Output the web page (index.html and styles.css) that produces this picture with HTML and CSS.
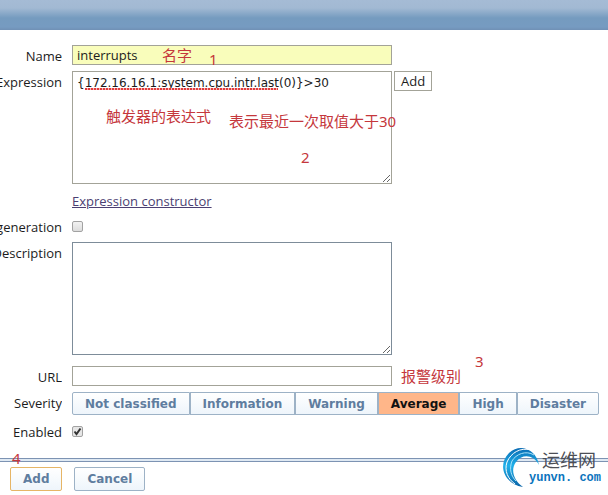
FILE: index.html
```
<!DOCTYPE html>
<html lang="en">

<head>
  <meta charset="UTF-8">
  <meta name="viewport" content="width=device-width, initial-scale=1.0">
  <title>Trigger</title>
  <link rel="stylesheet" href="styles.css">
</head>

<body>
  <header class="topbar"></header>

  <form class="trigger">
    <div class="fields">
      <label class="caption" for="name">Name</label>
      <div class="field">
        <input class="text required" type="text" id="name" value="interrupts" spellcheck="false">
      </div>

      <label class="caption" for="expression">Expression</label>
      <div class="field">
        <div class="area">
          <textarea class="text" id="expression" spellcheck="false">{172.16.16.1:system.cpu.intr.last(0)}&gt;30</textarea>
          <span class="squiggle"></span>
        </div>
        <button class="plain" type="button">Add</button>
      </div>

      <div class="field link-row">
        <a class="link" href="#">Expression constructor</a>
      </div>

      <label class="caption" for="generation">generation</label>
      <div class="field">
        <input class="check" type="checkbox" id="generation">
      </div>

      <label class="caption" for="description">Description</label>
      <div class="field last-area">
        <textarea class="text focused" id="description"></textarea>
      </div>

      <label class="caption" for="url">URL</label>
      <div class="field">
        <input class="text" type="text" id="url">
      </div>

      <span class="caption" id="severity">Severity</span>
      <div class="field severity" role="radiogroup" aria-labelledby="severity">
        <label><input type="radio" name="severity">Not classified</label>
        <label><input type="radio" name="severity">Information</label>
        <label><input type="radio" name="severity">Warning</label>
        <label><input type="radio" name="severity" checked>Average</label>
        <label><input type="radio" name="severity">High</label>
        <label><input type="radio" name="severity">Disaster</label>
      </div>

      <label class="caption" for="enabled">Enabled</label>
      <div class="field">
        <input class="check" type="checkbox" id="enabled" checked>
      </div>
    </div>

    <div class="actions">
      <button class="action main" type="button">Add</button>
      <button class="action" type="button">Cancel</button>
    </div>
  </form>

  <!-- notes over the form -->
  <span class="note note-name">名字</span>
  <span class="note note-one">1</span>
  <span class="note note-expression">触发器的表达式</span>
  <span class="note note-last">表示最近一次取值大于30</span>
  <span class="note note-two">2</span>
  <span class="note note-three">3</span>
  <span class="note note-level">报警级别</span>
  <span class="note note-four">4</span>

  <div class="brand">
    <svg class="swirl" width="40" height="42" viewBox="0 0 40 42">
      <defs>
        <linearGradient id="blue" x1="0" y1="0" x2="0" y2="1">
          <stop offset="0" stop-color="#0a6cb4" />
          <stop offset=".45" stop-color="#1fb0ea" />
          <stop offset="1" stop-color="#0b64a8" />
        </linearGradient>
      </defs>
      <path fill="url(#blue)" d="M37 18C34 2 18-4 7 6C-5 18 2 37 21 40C12 34 8 23 14 15C20 7 31 7 37 18Z" />
      <path fill="none" stroke="#fff" stroke-width="1" d="M29 3C18 0 9 6 5 15C2 24 6 32 13 37" />
      <path fill="none" stroke="#a9e2f8" stroke-width="1" d="M32 8C24 3 14 7 10 14C7 22 9 29 14 34" />
    </svg>
    <div class="brand-text">
      <span class="brand-name">运维网</span>
      <span class="brand-url">yunvn. com</span>
    </div>
  </div>
</body>

</html>
```
FILE: styles.css
```
* {
  box-sizing: border-box;
}

body {
  position: relative;
  margin: 0;
  background: #fff;
  color: #1c1c1c;
  font-family: "Open Sans", "Noto Sans CJK SC", sans-serif;
  font-size: 13px;
  line-height: 18px;
}

.topbar {
  height: 30px;
  background: linear-gradient(#a5bbd5 0, #a2b9d3 8px, #759bbf 18px, #769bc1 27px, #7090b5 100%);
}

/* form rows */
.fields {
  display: grid;
  grid-template-columns: 62px 1fr;
  column-gap: 10px;
  row-gap: 6px;
  padding: 15px 0 17px;
}

.caption {
  display: flex;
  justify-content: flex-end;
  padding-top: 2px;
  overflow: hidden;
  white-space: nowrap;
}

.field {
  display: flex;
  align-items: flex-start;
  gap: 2px;
}

.link-row {
  grid-column: 2;
  padding-top: 2px;
}

.last-area {
  padding-bottom: 5px;
}

.text {
  display: block;
  width: 320px;
  height: 20px;
  margin: 0;
  padding: 0 4px;
  border: 1px solid #a3a398;
  border-radius: 0;
  outline: none;
  background: #fff;
  color: #1c1c1c;
  font: inherit;
}

textarea.text {
  height: 113px;
  padding: 2px 4px;
  font-family: "DejaVu Sans", sans-serif;
  font-size: 12px;
}

.text.required {
  background: #f9fdbb;
}

.text.focused {
  border-color: #7d8c99;
}

.area {
  position: relative;
}

/* spelling underline */
.squiggle {
  position: absolute;
  top: 17px;
  left: 13px;
  width: 193px;
  height: 2px;
  background: repeating-linear-gradient(90deg, #e03c3c 0, #e03c3c 2px, #f6b5b5 2px, #f6b5b5 3px);
}

.plain {
  height: 20px;
  padding: 0 6px;
  border: 1px solid #a3a398;
  background: #fff;
  color: #1c1c1c;
  font: inherit;
}

.link {
  color: #4b3f72;
}

.check {
  appearance: none;
  width: 11px;
  height: 11px;
  margin: 5px 0 4px;
  border: 1px solid #a2a2a2;
  border-radius: 2px;
  background: linear-gradient(#f2f2f2, #dcdcdc);
}

.check:checked {
  background: url("data:image/svg+xml,%3Csvg xmlns='http://www.w3.org/2000/svg' width='9' height='9'%3E%3Cpath d='M1.5 4.5L3.5 7L7.5 1.5' fill='none' stroke='%23333' stroke-width='2'/%3E%3C/svg%3E") #e6e6e6;
}

/* severity switch */
.severity {
  gap: 0;
}

.severity label {
  height: 23px;
  padding: 2px 12px;
  border: 1px solid #9db2c6;
  background: linear-gradient(#fff, #eef5fb);
  color: #5f7d9f;
  font-family: "DejaVu Sans", sans-serif;
  font-size: 12px;
  font-weight: bold;
  white-space: nowrap;
}

.severity label:first-child {
  border-radius: 2px 0 0 2px;
}

.severity label:last-child {
  border-radius: 0 2px 2px 0;
}

.severity label:has(:checked) {
  background: #ffb689;
  color: #111;
}

.severity input {
  appearance: none;
  position: absolute;
  margin: 0;
}

/* bottom buttons */
.actions {
  display: flex;
  gap: 12px;
  padding: 8px 10px 5px;
  border-top: 1px solid #7d93b3;
  background: linear-gradient(#dfe9f3 0, #dfe9f3 2px, #7d93b3 2px, #7d93b3 3px, #fff 3px);
}

.action {
  height: 24px;
  padding: 0 12px;
  border: 1px solid #9db2c6;
  border-radius: 2px;
  background: linear-gradient(#fff, #eef5fb);
  color: #5f7d9f;
  font-family: "DejaVu Sans", sans-serif;
  font-size: 12px;
  font-weight: bold;
}

.action.main {
  border-color: #e6b566;
}

/* red notes */
.note {
  position: absolute;
  color: #c5373c;
  font-family: "Noto Sans", "Noto Sans CJK SC", sans-serif;
  font-size: 15px;
  line-height: 20px;
  white-space: nowrap;
  pointer-events: none;
}

.note-name {
  top: 45px;
  left: 162px;
}

.note-one {
  top: 49px;
  left: 209px;
}

.note-expression {
  top: 106px;
  left: 106px;
}

.note-last {
  top: 111px;
  left: 229px;
}

.note-two {
  top: 147px;
  left: 301px;
}

.note-three {
  top: 351px;
  left: 475px;
}

.note-level {
  top: 366px;
  left: 401px;
}

.note-four {
  top: 448px;
  left: 12px;
}

/* logo */
.brand {
  position: absolute;
  top: 447px;
  right: 7px;
  display: flex;
}

.swirl {
  margin-right: -13px;
}

.brand-text {
  display: flex;
  flex-direction: column;
  align-items: flex-end;
  padding-top: 2px;
}

.brand-name {
  margin-right: 5px;
  color: #4c4e55;
  font-family: "Noto Sans CJK SC", sans-serif;
  font-size: 18px;
  line-height: 20px;
}

.brand-url {
  color: #0b74bd;
  font-family: "Liberation Mono", monospace;
  font-size: 12px;
  font-weight: bold;
  line-height: 18px;
}
```
